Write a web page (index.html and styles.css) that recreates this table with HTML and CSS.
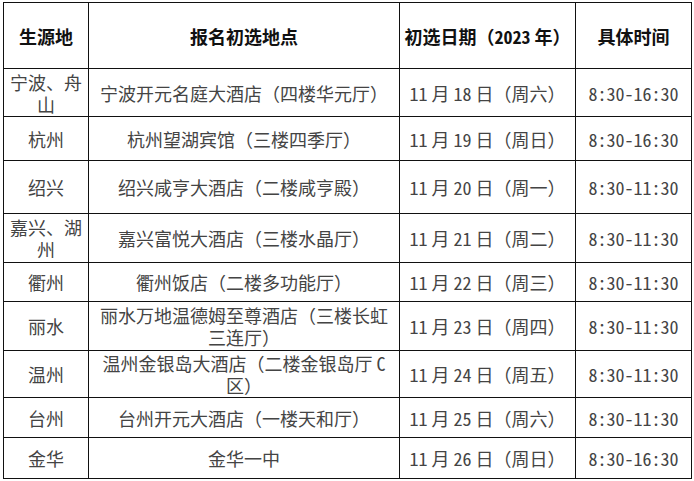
FILE: index.html
```html
<!DOCTYPE html>
<html lang="zh-CN">
<head>
<meta charset="utf-8">
<link rel="stylesheet" href="styles.css">
</head>
<body>
<div class="page">
<table class="sched">
<colgroup><col class="c1"><col class="c2"><col class="c3"><col class="c4"></colgroup>
<thead>
<tr><th>生源地</th><th>报名初选地点</th><th>初选日期（<span class="n">2023</span> 年）</th><th>具体时间</th></tr>
</thead>
<tbody>
<tr><td>宁波、舟山</td><td>宁波开元名庭大酒店（四楼华元厅）</td><td><span class="n">11</span> 月 <span class="n">18</span> 日（周六）</td><td class="n">8:30-16:30</td></tr>
<tr><td>杭州</td><td>杭州望湖宾馆（三楼四季厅）</td><td><span class="n">11</span> 月 <span class="n">19</span> 日（周日）</td><td class="n">8:30-16:30</td></tr>
<tr><td>绍兴</td><td>绍兴咸亨大酒店（二楼咸亨殿）</td><td><span class="n">11</span> 月 <span class="n">20</span> 日（周一）</td><td class="n">8:30-11:30</td></tr>
<tr><td>嘉兴、湖州</td><td>嘉兴富悦大酒店（三楼水晶厅）</td><td><span class="n">11</span> 月 <span class="n">21</span> 日（周二）</td><td class="n">8:30-11:30</td></tr>
<tr><td>衢州</td><td>衢州饭店（二楼多功能厅）</td><td><span class="n">11</span> 月 <span class="n">22</span> 日（周三）</td><td class="n">8:30-11:30</td></tr>
<tr><td>丽水</td><td>丽水万地温德姆至尊酒店（三楼长虹三连厅）</td><td><span class="n">11</span> 月 <span class="n">23</span> 日（周四）</td><td class="n">8:30-11:30</td></tr>
<tr><td>温州</td><td>温州金银岛大酒店（二楼金银岛厅 <span class="n">C</span> 区）</td><td><span class="n">11</span> 月 <span class="n">24</span> 日（周五）</td><td class="n">8:30-11:30</td></tr>
<tr><td>台州</td><td>台州开元大酒店（一楼天和厅）</td><td><span class="n">11</span> 月 <span class="n">25</span> 日（周六）</td><td class="n">8:30-11:30</td></tr>
<tr><td>金华</td><td>金华一中</td><td><span class="n">11</span> 月 <span class="n">26</span> 日（周日）</td><td class="n">8:30-16:30</td></tr>
</tbody>
</table>
</div>
</body>
</html>
```
FILE: styles.css
```css
html, body {
  margin: 0;
  padding: 0;
  background: #fff;
}
.page {
  padding: 2px 0 0 3px;
}
.sched {
  border-collapse: collapse;
  table-layout: fixed;
  width: 689px;
  font-family: "Noto Sans CJK SC", "Liberation Serif", sans-serif;
  font-size: 18px;
  line-height: 22px;
  color: #444;
}
.n {
  font-feature-settings: "hwid";
}
.c1 { width: 85px; }
.c2 { width: 311px; }
.c3 { width: 176px; }
.c4 { width: 116px; }
.sched th, .sched td {
  border: 1px solid #111;
  padding: 0 6px;
  text-align: center;
  vertical-align: middle;
}
.sched th {
  font-weight: bold;
  color: #111;
  white-space: nowrap;
  padding: 0;
}
.sched thead tr { height: 66px; }
.sched tbody tr:nth-child(1) { height: 48px; }
.sched tbody tr:nth-child(2) { height: 44px; }
.sched tbody tr:nth-child(3) { height: 53px; }
.sched tbody tr:nth-child(4) { height: 49px; }
.sched tbody tr:nth-child(5) { height: 39px; }
.sched tbody tr:nth-child(6) { height: 49px; }
.sched tbody tr:nth-child(7) { height: 47px; }
.sched tbody tr:nth-child(8) { height: 40px; }
.sched tbody tr:nth-child(9) { height: 41px; }
```
